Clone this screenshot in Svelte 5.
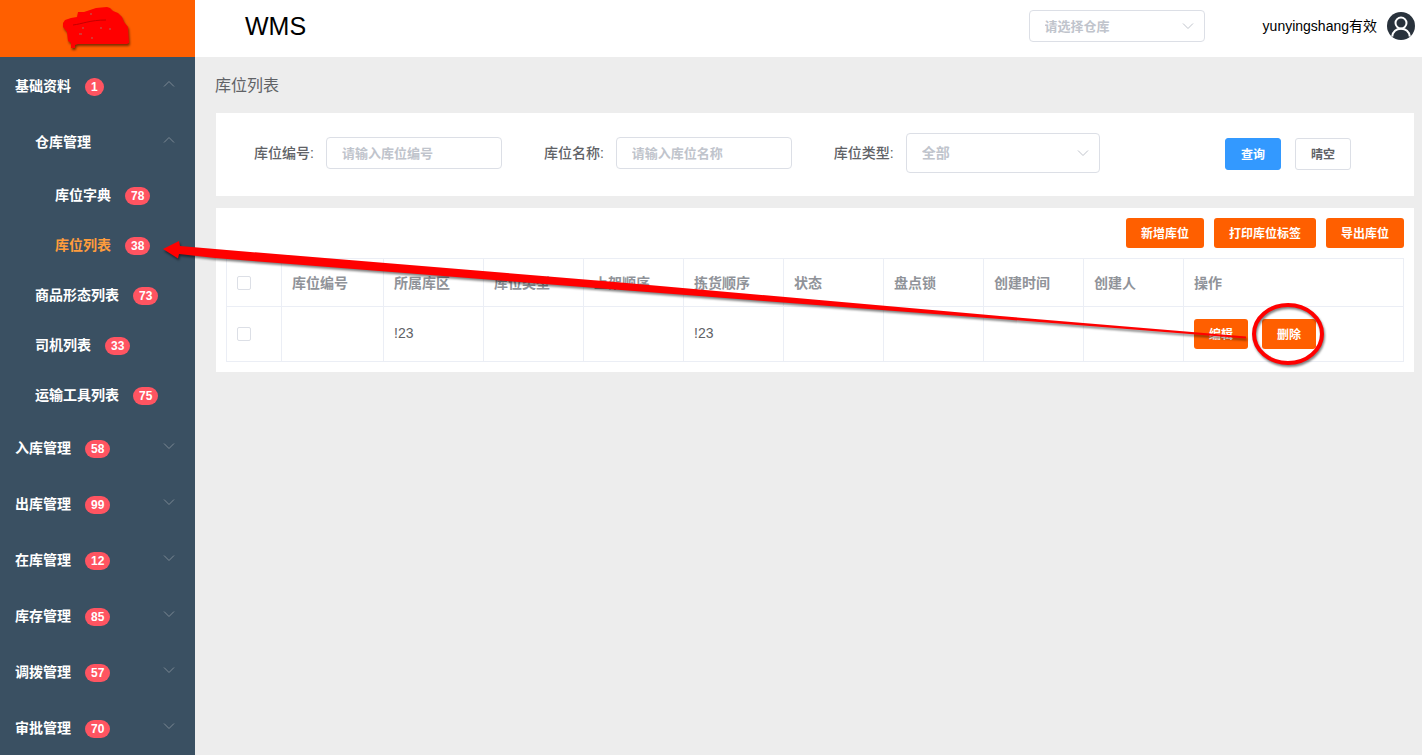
<script lang="ts">
  interface MenuItem {
    title: string;
    count?: number;
    level: number;
    arrow?: 'up' | 'down';
    active?: boolean;
  }

  const menu: MenuItem[] = [
    { title: '基础资料', count: 1, level: 1, arrow: 'up' },
    { title: '仓库管理', level: 2, arrow: 'up' },
    { title: '库位字典', count: 78, level: 3 },
    { title: '库位列表', count: 38, level: 3, active: true },
    { title: '商品形态列表', count: 73, level: 2 },
    { title: '司机列表', count: 33, level: 2 },
    { title: '运输工具列表', count: 75, level: 2 },
    { title: '入库管理', count: 58, level: 1, arrow: 'down' },
    { title: '出库管理', count: 99, level: 1, arrow: 'down' },
    { title: '在库管理', count: 12, level: 1, arrow: 'down' },
    { title: '库存管理', count: 85, level: 1, arrow: 'down' },
    { title: '调拨管理', count: 57, level: 1, arrow: 'down' },
    { title: '审批管理', count: 70, level: 1, arrow: 'down' },
  ];

  const columns = ['库位编号', '所属库区', '库位类型', '上架顺序', '拣货顺序', '状态', '盘点锁', '创建时间', '创建人'];

  const rows = [['', '!23', '', '', '!23', '', '', '', '']];

  let code = $state('');
  let name = $state('');
  let checked = $state(rows.map(() => false));

  function clear() {
    code = '';
    name = '';
  }

  function toggleAll(e: Event) {
    const on = (e.currentTarget as HTMLInputElement).checked;
    checked = rows.map(() => on);
  }
</script>

{#snippet chevron()}
  <svg class="chevron" viewBox="0 0 12 12" aria-hidden="true">
    <path d="M1 3.5 6 8.5 11 3.5" />
  </svg>
{/snippet}

<div class="layout">
  <aside class="sidebar">
    <div class="logo">
      <svg viewBox="0 0 72 46" aria-hidden="true">
        <path
          class="scribble"
          d="M1 17 3 14 9 12 15 11 16 6 22 6 28 4 34 2 45 1 48 2 51 5 56 7 60 11 62 16 66 21 67 37 65 38 16 38 13 39 13 42 9 42 9 37 6 35 5 26 1 21Z"
        />
        <path class="crease" d="M11 19C20 18 28 14 44 14" />
        <path class="speck" d="M28 8h2M20 22h2M38 22h2M47 23h2M17 28h3M29 32h2" />
      </svg>
    </div>
    <nav>
      {#each menu as item}
        <a
          href="#menu"
          class="menu-item level-{item.level}"
          class:submenu={item.arrow}
          class:active={item.active}
        >
          <span>{item.title}</span>
          {#if item.count}
            <span class="badge">{item.count}</span>
          {/if}
          {#if item.arrow}
            <span class="arrow {item.arrow}">{@render chevron()}</span>
          {/if}
        </a>
      {/each}
    </nav>
  </aside>

  <div class="content">
    <header class="header">
      <h1>WMS</h1>
      <div class="select-box">
        <select class="small" aria-label="请选择仓库">
          <option>请选择仓库</option>
        </select>
        {@render chevron()}
      </div>
      <div class="user">
        <span>yunyingshang有效</span>
        <svg class="avatar" viewBox="0 0 28 28" aria-hidden="true">
          <circle cx="14" cy="14" r="14" fill="#29323c" />
          <circle cx="14" cy="11" r="5.5" />
          <path d="M5.2 24.5C6 19.5 9 16.800 14 16.800s8 2.700 8.800 7.700" />
        </svg>
      </div>
    </header>

    <main>
      <h2>库位列表</h2>

      <form class="panel filters" onsubmit={(e) => e.preventDefault()}>
        <div class="field">
          <label for="code">库位编号:</label>
          <input id="code" type="text" placeholder="请输入库位编号" bind:value={code} />
        </div>
        <div class="field">
          <label for="name">库位名称:</label>
          <input id="name" type="text" placeholder="请输入库位名称" bind:value={name} />
        </div>
        <div class="field">
          <label for="type">库位类型:</label>
          <div class="select-box">
            <select id="type">
              <option>全部</option>
            </select>
            {@render chevron()}
          </div>
        </div>
        <div class="actions">
          <button type="submit" class="query">查询</button>
          <button type="button" class="plain" onclick={clear}>晴空</button>
        </div>
      </form>

      <section class="panel list">
        <div class="toolbar">
          <button type="button">新增库位</button>
          <button type="button">打印库位标签</button>
          <button type="button">导出库位</button>
        </div>
        <table>
          <colgroup>
            <col class="col-check" />
            <col />
            {#each columns.slice(1) as _}
              <col class="col-data" />
            {/each}
            <col class="col-ops" />
          </colgroup>
          <thead>
            <tr>
              <th class="check"><input type="checkbox" aria-label="全部" onchange={toggleAll} /></th>
              {#each columns as column}
                <th>{column}</th>
              {/each}
              <th>操作</th>
            </tr>
          </thead>
          <tbody>
            {#each rows as row, i}
              <tr>
                <td class="check"><input type="checkbox" aria-label="库位" bind:checked={checked[i]} /></td>
                {#each row as cell}
                  <td>{cell}</td>
                {/each}
                <td class="check">
                  <div class="ops">
                    <button type="button">编辑</button>
                    <button type="button">删除</button>
                  </div>
                </td>
              </tr>
            {/each}
          </tbody>
        </table>
      </section>
    </main>
  </div>

  <!-- hand-drawn marks over the page: arrow to the menu entry, ring round the delete button -->
  <svg class="marks" width="1422" height="755" aria-hidden="true">
    <path d="M163 249 179 241 180 246 215 249 615 282 1000 316 1246 336.500 1246 338.500 1000 319 615 289.500 215 258 179 254 178 258.500Z" fill="#f00" />
    <ellipse cx="1288" cy="334" rx="34" ry="29" fill="none" stroke="#f00" stroke-width="4" />
  </svg>
</div>

<style>
  :global(body) {
    background: #ededed;
    font-family: 'Liberation Sans', 'Noto Sans CJK SC', sans-serif;
    font-size: 14px;
    color: #606266;
  }

  .layout {
    position: relative;
    display: flex;
    min-height: 100vh;
    overflow: hidden;
  }

  .sidebar {
    flex: 0 0 195px;
    background: #3a5062;
  }

  .logo {
    height: 57px;
    display: flex;
    align-items: center;
    justify-content: center;
    background: #ff5f00;
  }

  .logo svg {
    width: 72px;
    height: 46px;
  }

  .scribble {
    fill: #f00;
    filter: drop-shadow(1px 2px 1px rgba(0, 0, 0, 0.5));
  }

  .crease,
  .speck {
    fill: none;
    stroke: #c40000;
    stroke-width: 1;
  }

  .speck {
    stroke: #b06a60;
  }

  .menu-item {
    box-sizing: border-box;
    display: flex;
    align-items: center;
    height: 50px;
    padding-top: 2px;
    padding-right: 20px;
    color: #fff;
    font-weight: 600;
    line-height: 20px;
    text-decoration: none;
  }

  .submenu {
    height: 56px;
  }

  .level-1 {
    padding-left: 15px;
  }

  .level-2 {
    padding-left: 35px;
  }

  .level-3 {
    padding-left: 55px;
  }

  .active {
    color: #ff9c3c;
  }

  .badge {
    margin: 1px 0 0 14px;
    padding: 0 6px;
    border-radius: 9px;
    background: #ff5461;
    color: #fff;
    font-size: 12px;
    line-height: 18px;
  }

  .chevron {
    display: block;
    width: 12px;
    height: 12px;
    fill: none;
    stroke: #c0c4cc;
    stroke-width: 1;
  }

  .arrow {
    margin-left: auto;
    margin-bottom: 4px;
  }

  .arrow .chevron {
    stroke: #7c8994;
  }

  .arrow.up .chevron {
    transform: rotate(180deg);
  }

  .content {
    flex: 1;
    min-width: 0;
  }

  .header {
    box-sizing: border-box;
    display: flex;
    align-items: center;
    height: 57px;
    padding: 0 7px 5px 50px;
    background: #fff;
    color: #000;
  }

  h1 {
    margin: 0 auto 0 0;
    font-size: 25px;
    font-weight: 400;
  }

  .user {
    display: flex;
    align-items: center;
    gap: 10px;
    margin-left: 58px;
  }

  .user span {
    padding-bottom: 2px;
  }

  .avatar {
    width: 28px;
    height: 28px;
    fill: none;
    stroke: #fff;
    stroke-width: 2;
  }

  .avatar circle:first-child {
    stroke: none;
  }

  main {
    padding: 17px 8px 16px 20px;
  }

  h2 {
    margin: 0 0 15px;
    font-size: 16px;
    font-weight: 400;
    line-height: 24px;
  }

  .panel {
    margin: 0 0 12px 1px;
    background: #fff;
  }

  .filters {
    display: flex;
    align-items: center;
    gap: 42px;
    padding: 20px 63px 23px 38px;
  }

  .field {
    display: flex;
    align-items: center;
    gap: 12px;
  }

  .field label {
    padding-bottom: 2px;
    font-weight: 500;
  }

  input[type='text'],
  select {
    box-sizing: border-box;
    width: 176px;
    height: 32px;
    padding: 0 15px;
    border: 1px solid #dcdfe6;
    border-radius: 4px;
    background: #fff;
    color: #606266;
    font: inherit;
    font-size: 13px;
    outline: none;
  }

  input::placeholder {
    color: #c0c4cc;
    font-weight: 600;
  }

  select {
    width: 194px;
    height: 40px;
    appearance: none;
    color: #c0c4cc;
    font-size: 14px;
    font-weight: 600;
  }

  select.small {
    width: 176px;
    height: 32px;
    font-size: 13px;
    font-weight: 600;
  }

  .select-box {
    position: relative;
  }

  .select-box .chevron {
    position: absolute;
    top: 50%;
    right: 11px;
    margin-top: -6px;
    pointer-events: none;
  }

  .actions {
    display: flex;
    gap: 14px;
    margin-left: auto;
    padding-top: 2px;
  }

  button {
    height: 30px;
    padding: 0 15px 2px;
    border: 0;
    border-radius: 3px;
    background: #ff5f00;
    color: #fff;
    font: inherit;
    font-size: 12px;
    font-weight: 600;
    cursor: pointer;
  }

  .actions button {
    box-sizing: border-box;
    height: 32px;
    border: 1px solid #3399ff;
  }

  .query {
    background: #3399ff;
  }

  .actions .plain {
    border-color: #dcdfe6;
    background: #fff;
    color: #606266;
    font-weight: 600;
  }

  .list {
    padding: 10px;
  }

  .toolbar {
    display: flex;
    justify-content: flex-end;
    gap: 10px;
    margin-bottom: 10px;
  }

  table {
    width: 100%;
    table-layout: fixed;
    border-collapse: separate;
    border-spacing: 0;
    border: 1px solid #ebeef5;
    border-width: 1px 0 0 1px;
  }

  .col-check {
    width: 55px;
  }

  .col-data {
    width: 100px;
  }

  .col-ops {
    width: 220px;
  }

  th,
  td {
    box-sizing: border-box;
    height: 55px;
    padding: 0 10px 2px;
    border: 1px solid #ebeef5;
    border-width: 0 1px 1px 0;
    text-align: left;
  }

  th {
    height: 48px;
    color: #909399;
    font-weight: 600;
  }

  .check {
    padding-bottom: 0;
  }

  input[type='checkbox'] {
    display: block;
    box-sizing: border-box;
    width: 14px;
    height: 14px;
    margin: 0;
    border: 1px solid #dcdfe6;
    border-radius: 2px;
    background: #fff;
    appearance: none;
  }

  input[type='checkbox']:checked {
    background: #3399ff;
  }

  .ops {
    display: flex;
    gap: 14px;
  }

  .marks {
    position: absolute;
    top: 0;
    left: 0;
    pointer-events: none;
    filter: drop-shadow(1px 2px 1px rgba(0, 0, 0, 0.5));
  }
</style>
